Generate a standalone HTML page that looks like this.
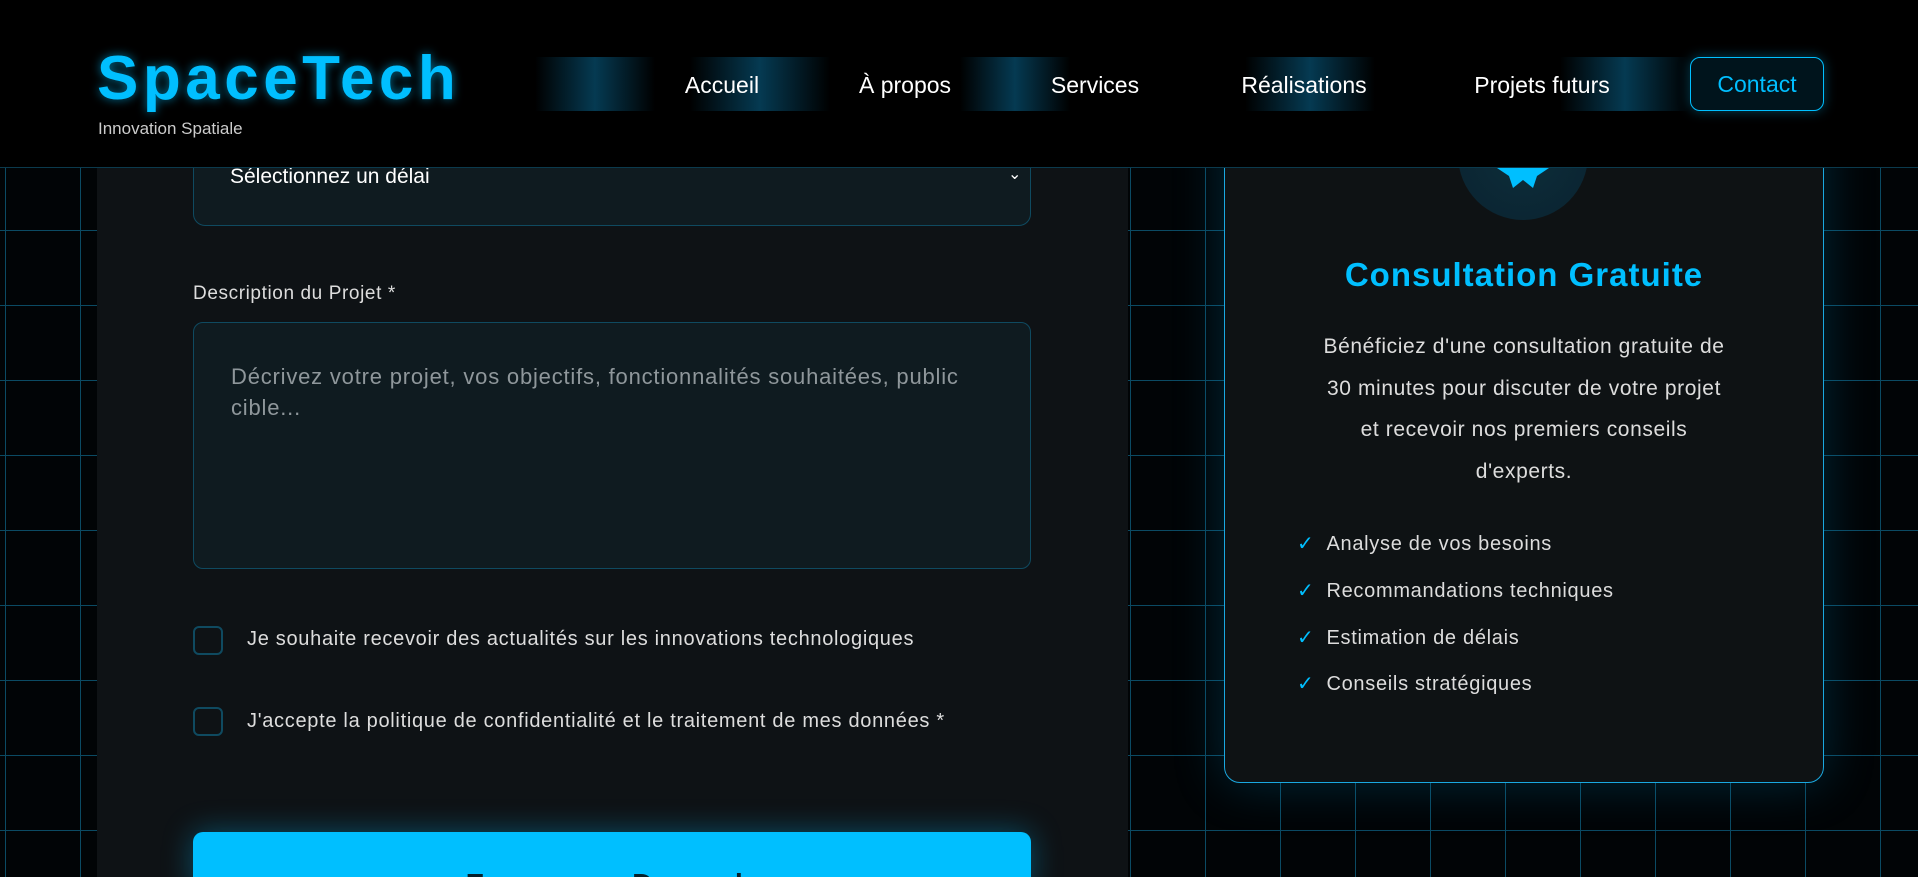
<!DOCTYPE html>
<html><head><meta charset="utf-8"><style>
*{margin:0;padding:0;box-sizing:border-box}
html,body{width:1918px;height:877px;overflow:hidden;background:#000;font-family:"Liberation Sans",sans-serif;color:#e6e6e6;position:relative}
.wrap{position:absolute;left:0;top:0;width:1918px;height:877px;overflow:hidden}
.grid{position:absolute;inset:0;background-color:#010406;
background-image:linear-gradient(#0b4a63 1px,transparent 1px),linear-gradient(90deg,#0b4a63 1px,transparent 1px);
background-size:75px 75px;background-position:5px 5px}
header{position:absolute;left:0;top:0;width:1918px;height:168px;background:#000;border-bottom:1px solid #0b3a4d;z-index:5}
.logo{position:absolute;left:97px;top:43px;font-size:62px;font-weight:bold;color:#00bfff;letter-spacing:4.5px;text-shadow:0 0 10px rgba(0,191,255,.6)}
.sub{position:absolute;left:98px;top:119px;font-size:17px;color:#ccc}
.band{position:absolute;top:57px;height:54px;background:linear-gradient(90deg,rgba(0,0,0,0),#053a52,rgba(0,0,0,0))}
.nav{position:absolute;top:72px;font-size:23px;color:#fff;transform:translateX(-50%);white-space:nowrap}
.contact{position:absolute;left:1690px;top:57px;width:134px;height:54px;border:1px solid #00bfff;border-radius:10px;color:#00bfff;font-size:23px;text-align:center;line-height:52px;background:#00141c;box-shadow:0 0 12px rgba(0,191,255,.35)}
.left{position:absolute;left:97px;top:100px;width:1031px;height:800px;background:#0e1215}
.sel{position:absolute;left:193px;top:120px;width:838px;height:106px;border:1px solid #0f4a60;border-radius:12px;background:#0f1b20}
.seltxt{position:absolute;left:230px;top:165px;font-size:21px;color:#fff}
.chev{position:absolute;left:1008px;top:164px;font-size:16px;color:#fff}
.lbl{position:absolute;left:193px;top:283px;font-size:19px;letter-spacing:.6px;color:#ddd}
.ta{position:absolute;left:193px;top:322px;width:838px;height:247px;border:1px solid #0f4a60;border-radius:10px;background:#0f1b20;padding:38px 40px 0 37px;font-size:22px;letter-spacing:.8px;line-height:31px;color:#8f979b}
.cb{position:absolute;left:193px;width:30px;height:29px;border:2px solid #0f4a60;border-radius:6px}
.cbt{position:absolute;left:247px;font-size:20px;letter-spacing:.7px;color:#ddd;white-space:nowrap}
.btn{position:absolute;left:193px;top:832px;width:838px;height:60px;border-radius:10px;background:#00bfff;box-shadow:0 0 30px rgba(0,191,255,.35);text-align:center;font-size:28px;font-weight:bold;color:#06202b;padding-top:36px;overflow:hidden}
.right{position:absolute;left:1224px;top:90px;width:600px;height:693px;border:1.5px solid #1aa8e0;border-radius:16px;background:#0e1214;box-shadow:0 0 50px rgba(0,150,210,.25)}
.circ{position:absolute;left:1458px;top:90px;width:130px;height:130px;border-radius:50%;background:radial-gradient(circle,#0d2e3a,#0a2230)}
h3{position:absolute;left:1224px;width:600px;top:256px;text-align:center;font-size:33px;color:#00bfff;letter-spacing:1px;font-weight:bold}
.p{position:absolute;left:1224px;width:600px;top:326px;text-align:center;font-size:21px;letter-spacing:.6px;line-height:41.5px;color:#ddd;white-space:nowrap}
.li{position:absolute;left:1297px;font-size:20px;letter-spacing:.7px;color:#ddd}
.li b{color:#00bfff;font-weight:normal;margin-right:12px}
</style></head><body><div class="wrap">
<div class="grid"></div>
<div class="left"></div>
<div class="sel"></div>
<div class="seltxt">Sélectionnez un délai</div>
<div class="chev">&#8964;</div>
<div class="lbl">Description du Projet *</div>
<div class="ta">Décrivez votre projet, vos objectifs, fonctionnalités souhaitées, public cible...</div>
<div class="cb" style="top:626px"></div>
<div class="cbt" style="top:628px">Je souhaite recevoir des actualités sur les innovations technologiques</div>
<div class="cb" style="top:707px"></div>
<div class="cbt" style="top:710px">J'accepte la politique de confidentialité et le traitement de mes données *</div>
<div class="btn">Envoyer ma Demande</div>
<div class="right"></div>
<div class="circ"></div>
<svg style="position:absolute;left:1497px;top:150px" width="52" height="40" viewBox="0 0 52 40"><polygon points="0,18 18,18 26,0 34,18 52,18 40,26 36,38 26,30 16,38 12,26" fill="#00bfff"/></svg>
<h3>Consultation Gratuite</h3>
<div class="p">Bénéficiez d'une consultation gratuite de<br>30 minutes pour discuter de votre projet<br>et recevoir nos premiers conseils<br>d'experts.</div>
<div class="li" style="top:531px"><b>✓</b>Analyse de vos besoins</div>
<div class="li" style="top:578px"><b>✓</b>Recommandations techniques</div>
<div class="li" style="top:625px"><b>✓</b>Estimation de délais</div>
<div class="li" style="top:671px"><b>✓</b>Conseils stratégiques</div>
<header>
<div class="logo">SpaceTech</div>
<div class="sub">Innovation Spatiale</div>
<div class="band" style="left:535px;width:120px"></div>
<div class="band" style="left:690px;width:140px"></div>
<div class="band" style="left:960px;width:110px"></div>
<div class="band" style="left:1245px;width:130px"></div>
<div class="band" style="left:1560px;width:130px"></div>
<div class="nav" style="left:722px">Accueil</div>
<div class="nav" style="left:905px">À propos</div>
<div class="nav" style="left:1095px">Services</div>
<div class="nav" style="left:1304px">Réalisations</div>
<div class="nav" style="left:1542px">Projets futurs</div>
<div class="contact">Contact</div>
</header>
</div></body></html>
